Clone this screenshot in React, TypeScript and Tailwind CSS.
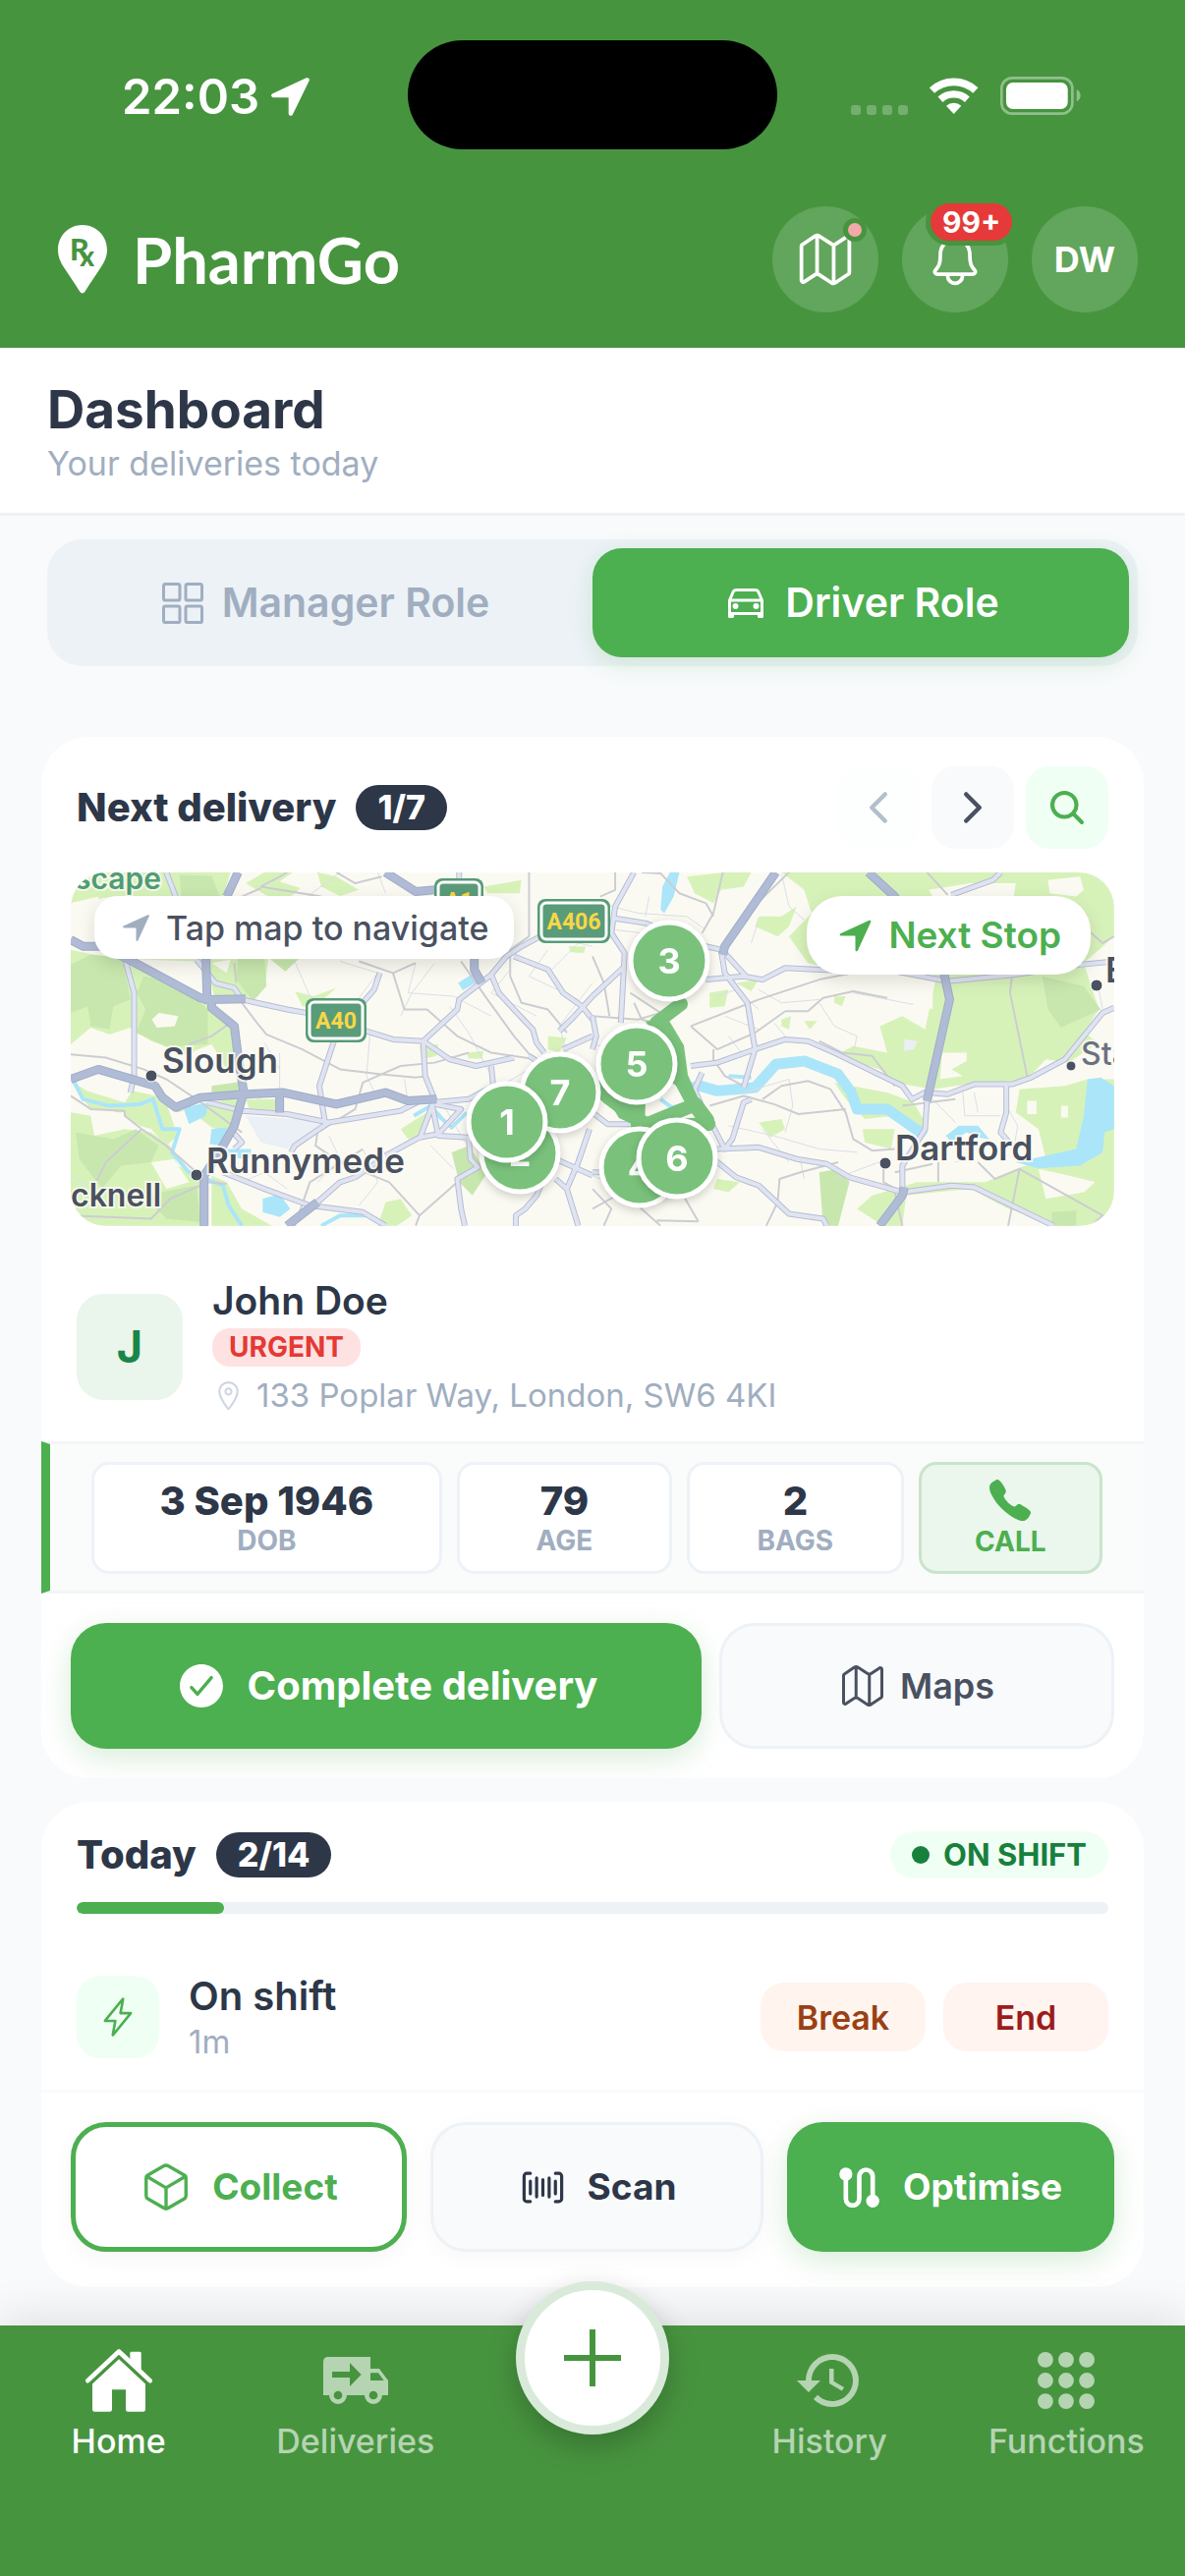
import type { ReactNode } from "react";
import {
  IoBarcodeOutline,
  IoCall,
  IoCarOutline,
  IoCheckmarkCircle,
  IoChevronBack,
  IoChevronForward,
  IoCubeOutline,
  IoFlashOutline,
  IoGridOutline,
  IoLocationOutline,
  IoMapOutline,
  IoNavigate,
  IoNotificationsOutline,
  IoSearch,
} from "react-icons/io5";
import { MdHistory } from "react-icons/md";

/* ---------- Drawn icons ---------- */

function LocationArrow() {
  return (
    <svg viewBox="678 56 118 118" className="size-[39px]" aria-hidden="true">
      <path d="M789 63L685 111H738V167z" fill="#fff" stroke="#fff" strokeWidth="13" strokeLinejoin="round" />
    </svg>
  );
}

function SignalDots() {
  return (
    <span className="flex gap-1.5 pt-7" aria-hidden="true">
      {[0, 1, 2, 3].map((i) => (
        <span key={i} className="size-[10px] rounded-[3px] bg-[#75af70]" />
      ))}
    </span>
  );
}

function Wifi() {
  return (
    <svg viewBox="526 56 152 112" className="h-[37px] w-[50px]" fill="none" stroke="#fff" aria-hidden="true">
      <path d="M533.5 95.6A99 99 0 0 1 668.5 95.6" strokeWidth="23" />
      <path d="M559.4 123.4A61 61 0 0 1 642.6 123.4" strokeWidth="22" />
      <path d="M601 168L577.8 143.1A34 34 0 0 1 624.2 143.1z" fill="#fff" stroke="none" />
    </svg>
  );
}

function Battery() {
  return (
    <svg viewBox="744 54 247 117" className="h-[39px] w-[82px]" aria-hidden="true">
      <rect x="748" y="58" width="217" height="109" rx="32" fill="none" stroke="#90c08c" strokeWidth="8" />
      <rect x="762" y="72" width="189" height="81" rx="21" fill="#fff" />
      <path d="M978 94c16 7 16 29 0 36z" fill="#90c08c" />
    </svg>
  );
}

function LogoPin() {
  return (
    <svg viewBox="27 506 151 211" className="h-[70px] w-[50px]" aria-hidden="true">
      <path
        d="M102 506c-42 0-75 33-75 76 0 22 9 40 18 54 14 22 34 50 48 73q9 14 18 0c14-23 34-51 48-73 9-14 19-32 19-54 0-43-34-76-76-76z"
        fill="#fff"
      />
      <g fill="#47943f" fontFamily="Lato, sans-serif" fontWeight="900">
        <text x="63" y="614" fontSize="92">R</text>
        <text x="94" y="632" fontSize="84">x</text>
      </g>
    </svg>
  );
}

function HomeIcon() {
  return (
    <svg viewBox="48 606 204 191" className="h-16 w-[68px]" fill="currentColor" aria-hidden="true">
      <path d="M55 702L150 613L245 702" fill="none" stroke="currentColor" strokeWidth="14" strokeLinecap="round" strokeLinejoin="round" />
      <path d="M188 614h26q4 0 4 4v52l-34-34v-18q0-4 4-4z" />
      <path d="M150 636L231 712V790q0 7-7 7H178q-7 0-7-7V729H129v61q0 7-7 7H76q-7 0-7-7V712z" />
    </svg>
  );
}

function TruckIcon() {
  return (
    <svg viewBox="774 630 198 144" className="h-12 w-[66px]" fill="currentColor" aria-hidden="true">
      <path
        fillRule="evenodd"
        d="M788 630H918V666H945L972 702V747H954a27 27 0 0 1-54 0H846a27 27 0 0 1-54 0H774V644a14 14 0 0 1 14-14zM918 679v23h41l-17-23zM801 675v18h54v27l35-36-35-36v27zM806 747a13 13 0 1 0 26 0a13 13 0 1 0-26 0M914 747a13 13 0 1 0 26 0a13 13 0 1 0-26 0"
      />
    </svg>
  );
}

function DotsIcon() {
  const steps = [24, 88, 152];
  return (
    <svg viewBox="0 0 176 176" className="size-[58px]" fill="currentColor" aria-hidden="true">
      {steps.map((y) => steps.map((x) => <circle key={`${x}-${y}`} cx={x} cy={y} r="24" />))}
    </svg>
  );
}

function RouteIcon() {
  return (
    <svg viewBox="191 46 122 123" className="size-[41px]" aria-hidden="true">
      <path d="M211 67V142a20.5 20.5 0 0 0 41 0V74a20.5 20.5 0 0 1 41 0V149" fill="none" stroke="#fff" strokeWidth="14" />
      <circle cx="211" cy="67" r="20" fill="#fff" />
      <circle cx="293" cy="149" r="20" fill="#fff" />
    </svg>
  );
}

/* ---------- Map ---------- */

const LIGHT = "#d7f2b9";
const DARK = "#c8e7ae";
const CREAM = "#fbfaf2";
const WATER = "#abe5f9";

type Pt = [string, string];

const westAreas: Pt[] = [
  [LIGHT, "M187 700L250 715L330 725L530 850L560 880L625 950L640 1010L600 1060L560 985L480 1020L440 990L400 975L345 935L290 955L240 935L187 985z"],
  [DARK, "M187 745L240 715L325 725L345 850L300 870L290 940L240 930L232 870L187 890z"],
  [DARK, "M380 780L430 790L530 860L550 880V985L440 992L360 950L385 880L362 830z"],
  [CREAM, "M402 910L420 890L472 900L462 930L415 935z"],
  [LIGHT, "M230 467H610L590 540H300L187 560L200 490z"],
  [DARK, "M475 475L560 478L582 540H480z"],
  [CREAM, "M187 560L260 540L260 680L187 665z"],
  [LIGHT, "M350 728H710L702 800L660 852L570 850L555 790L520 735z"],
  [DARK, "M630 728H700L705 810L670 855L625 790z"],
  [CREAM, "M560 740L610 730L600 770z"],
  [DARK, "M715 728H790L755 765z"],
  [LIGHT, "M700 467H775L740 495L795 515L770 540H710L650 500z"],
  [LIGHT, "M840 467L890 480L950 520L900 538L850 510z"],
  [LIGHT, "M1280 510L1380 490L1375 530L1290 530z"],
  [LIGHT, "M780 825L830 840L890 815L850 855L880 870L800 870z"],
  [LIGHT, "M187 1095L230 1125L330 1160L350 1125L415 1140L470 1190L600 1150L640 1150L600 1250L560 1235L520 1200L440 1160L470 1260L440 1290L400 1240L370 1230L300 1185L240 1180z"],
  [CREAM, "M240 1190L330 1190L330 1235L270 1270L240 1240z"],
  [LIGHT, "M187 1190L240 1200L250 1260L330 1240L400 1250L450 1290L470 1350L540 1380V1531H220L187 1480z"],
  [DARK, "M200 1250L300 1270L360 1240L420 1290L400 1340L320 1350L270 1420L210 1330z"],
  [DARK, "M380 1440L520 1410L530 1520L440 1510z"],
  [CREAM, "M400 1340L460 1330L500 1400L440 1420z"],
  [DARK, "M560 1110L650 1095L640 1130L560 1130z"],
  [LIGHT, "M650 1150H740V1185L660 1180z"],
  [LIGHT, "M560 1380L600 1400L640 1480L720 1531H560z"],
  [LIGHT, "M1060 1240L1130 1190L1120 1260L1080 1270z"],
  [DARK, "M1195 1310L1240 1290L1290 1370L1250 1440L1215 1400z"],
  [LIGHT, "M1020 1460L1060 1450L1090 1500L1050 1531H1000z"],
  [LIGHT, "M1110 990L1160 985L1155 1020L1115 1030z"],
  [LIGHT, "M1235 1010L1280 1005L1275 1028L1240 1028z"],
  [LIGHT, "M1450 960L1500 965L1480 1010L1450 1000z"],
  [LIGHT, "M1505 690L1550 690L1545 710L1510 708z"],
  ["#eaf0f6", "M650 1200L860 1215L760 1300L690 1280z"],
  [WATER, "M485 1175L550 1160L545 1200L500 1225z"],
  [WATER, "M560 1240L600 1235L590 1290L555 1285z"],
  [WATER, "M695 1450L740 1435L768 1480L740 1505L695 1490z"],
  [WATER, "M600 1300L665 1300L660 1330L610 1325z"],
  [WATER, "M1212 800L1255 770L1265 795L1225 822z"],
];

const westWater = [
  "M195 1095L220 1150L290 1170L370 1165L405 1150L430 1240L475 1240L455 1310L500 1370L590 1410L605 1470L640 1531",
  "M1095 1200L1140 1170L1170 1210L1195 1235L1235 1190",
  "M850 1531L900 1500L980 1500",
];

const westGray = [
  "M187 1015L280 1025L380 1060L440 1090L520 1150L640 1250",
  "M640 860L680 920L705 955L800 1000L900 1060L1010 1075L1100 1085L1130 1080",
  "M610 920L560 960L500 985",
  "M187 1140L240 1180L330 1185V1200L375 1240L440 1290L520 1370",
  "M375 1240L280 1340L250 1410",
  "M600 1405L550 1400L450 1450L400 1510L187 1500",
  "M690 515L600 560L560 540",
  "M690 510L740 480L760 467M620 740L625 800",
  "M690 510L850 540",
  "M1400 467V660L1350 700V780L1380 860L1450 880L1500 950",
  "M1040 770L1070 880L1130 880L1210 960L1300 1010L1420 1030",
  "M1010 1075L1060 1050L1150 1040L1240 1010",
  "M1220 735L1290 850L1360 960L1420 1040",
  "M1010 1075L960 1100L940 1180L840 1250L835 1290L900 1340L1030 1400L1110 1500L1100 1531",
  "M780 1531L820 1400L960 1300",
  "M890 467L940 500L1010 480",
  "M1110 1500L1180 1430L1260 1350",
  "M950 735L1040 770L1100 740",
];

const westMinor = [
  "M780 735L820 840L870 860M900 735L1000 770L940 860L820 880",
  "M1100 740L1080 830L1200 840L1300 900M1150 740L1090 830L1060 900",
  "M1190 870L1240 950L1300 1080M1350 760L1300 830L1420 900",
  "M740 1010V1120L680 1150M700 980L740 1060",
  "M1450 700L1400 780L1530 850M1460 760L1530 680L1568 690",
  "M1400 1060L1340 1100M1500 1010L1480 930L1568 800",
  "M980 940L970 1080L1000 1150M1070 1090L1080 1160",
  "M960 1300L1000 1400L950 1470M870 1260L900 1330L840 1400",
  "M790 560L900 467M1000 467L1020 530M600 560L700 540",
  "M1180 1180L1230 1280M1140 1290L1200 1360",
  "M187 1380L220 1400L200 1450M640 1400L700 1370L760 1420",
];

const westRoads = [
  "M440 467L465 540M330 725L355 830L355 1080L345 1130",
  "M520 730L570 800L620 815L640 850L760 880L810 890L970 945L1040 970L1120 975L1190 1030L1260 1050L1360 1025",
  "M1120 975L1210 880L1215 850L1300 775L1340 720L1380 690L1430 660",
  "M1300 775L1320 830L1360 880L1410 940L1420 980L1440 1010",
  "M1360 720L1450 760L1490 830L1540 870L1568 910",
  "M1568 840L1520 900L1480 945",
  "M1120 975L1125 1080L1150 1150L1110 1270",
  "M885 970L845 1110L860 1220",
  "M1005 770L990 820L960 860",
  "M550 1160L640 1185L760 1195L870 1220L1060 1185L1120 1150",
  "M770 1310L780 1290L870 1220",
  "M1020 1320L1110 1265L1160 1255L1220 1180L1150 1165",
  "M1140 1150L1160 1260L1240 1265L1290 1290",
  "M1240 1265L1245 1330L1265 1355L1210 1390L1220 1480L1230 1531",
  "M590 1370L700 1420L820 1470L960 1490L1020 1531",
  "M840 1460L900 1400L940 1385L1010 1330",
  "M1300 1050L1305 1110L1240 1150L1140 1160",
  "M1470 1300L1420 1440L1390 1480L1365 1500V1531",
  "M1470 1390L1500 1420L1530 1531M1500 1420L1530 1340L1560 1240",
  "M1470 1330L1568 1380M1215 467V540",
  "M1400 1020L1440 1050M1490 1000L1568 960",
  "M610 1240L640 1280L620 1300",
];

const westMotorways = [
  "M187 670L220 690L270 690L350 735L530 845L560 855L560 875L620 930L630 1020L645 1130L620 1230L580 1310L540 1380V1531",
  "M545 725L548 850L650 848",
  "M187 1090L260 1060L410 1110L430 1145L465 1175L530 1145L645 1135L750 1130L890 1165L1020 1130L1080 1155L1155 1150",
  "M740 1130V1190",
  "M630 467L600 540",
  "M1020 467L1100 525L1150 520",
  "M1255 725L1255 760L1275 800",
  "M840 1460L760 1531",
];

const eastAreas: Pt[] = [
  [LIGHT, "M250 480L350 467L420 467L400 510L340 520L320 560L270 530z"],
  [LIGHT, "M440 600L500 600L540 570L520 630L490 660L430 630z"],
  [LIGHT, "M500 467H1380V660L1300 740L1340 880L1300 950L1340 980L1260 1040L1200 1030L1150 1090L1060 1100L960 1110L900 1120L800 1100L760 1060L640 1020L690 990L780 1010L760 930L820 900L880 940L910 780L690 770L570 740L520 660L580 590L560 520z"],
  [CREAM, "M590 700L900 775L900 880L860 860L800 880L700 850L600 780z"],
  [CREAM, "M890 520L1000 500L1120 500L1115 540H900z"],
  [CREAM, "M1205 490L1290 480L1300 520L1280 540L1210 530z"],
  [CREAM, "M925 1010H990V1035L950 1060L980 1080L920 1090z"],
  [CREAM, "M640 1010L760 1090L790 1130L700 1160L660 1080L600 1040z"],
  [DARK, "M1190 780L1300 810L1345 880L1240 935L1205 880z"],
  [LIGHT, "M640 1100L780 1130L850 1160L890 1240L850 1250L800 1200L720 1210L670 1150z"],
  [LIGHT, "M1130 1120L1250 1110L1310 1090L1380 1090V1531H1240L1100 1480L1000 1420L830 1440L820 1531H770L700 1480L740 1440L860 1400L1040 1400L1120 1360L1200 1330L1180 1240L1120 1190z"],
  [CREAM, "M1180 1360L1260 1380L1330 1400L1300 1430L1200 1450z"],
  [CREAM, "M1150 1155H1175V1195H1150zM1240 1170H1258V1205H1240z"],
  [LIGHT, "M715 1240L800 1240L790 1300L720 1280z"],
  [DARK, "M600 1370L650 1360L680 1400L650 1531H610z"],
  [DARK, "M1215 1490L1280 1485V1531H1215z"],
  [LIGHT, "M330 1390L390 1400L360 1430L320 1420z"],
  [LIGHT, "M440 1220L500 1210L510 1240L470 1265z"],
  [LIGHT, "M310 830L360 820L350 870L310 875zM500 910L525 900L520 940L500 930zM560 915L595 915L575 940zM380 800L440 790L420 825z"],
  [LIGHT, "M640 840L670 840L660 870L640 860z"],
  ["#eaf0f6", "M825 970L860 975L850 1000L825 1005z"],
  [WATER, "M205 467H230L215 540L190 590L180 580L185 510z"],
  [WATER, "M1310 1090L1345 1085L1380 1110V1240L1355 1250L1350 1310L1290 1350L1180 1358L1120 1340L1200 1320L1280 1300L1300 1200z"],
  [WATER, "M935 1260L970 1230L1020 1230L1050 1270L1020 1265L990 1250L950 1280z"],
];

const eastGray = [
  "M60 467V520L20 540M130 467L180 470L230 530L300 560L320 600",
  "M345 467L320 590L290 650M520 467L400 600",
  "M0 900L120 910L180 890L100 830M260 930L440 850L600 790L690 770",
  "M260 930L330 1000L430 950L510 885H570L610 845L690 825L780 845",
  "M320 1000V1030L350 1080L400 1110M600 975L660 1010L740 1020L780 1080L800 1110",
  "M450 1150L500 1110L570 1095L630 1120L670 1190L690 1270L740 1305L800 1300",
  "M310 1170L400 1140L480 1165L545 1195L670 1180",
  "M885 467L940 535M1380 660L1350 680L1310 640",
  "M1110 780L1105 830L1150 1080M1020 1340L1065 1390L1130 1360L1350 1500L1320 1531",
  "M1130 1360L1100 1531M770 1350V1400L820 1430M800 1370L900 1345",
  "M490 1460L495 1390L550 1370L650 1340M490 1460L460 1531M800 1430L820 1531",
  "M0 1480L80 1430L180 1531M170 1515L280 1518M280 1518L240 1440M915 1340V1400",
  "M0 720L30 800L45 900M110 860L130 910L200 930",
  "M0 1420L50 1480L30 1531M820 1170L960 1150",
];

const eastMinor = [
  "M20 560L120 590L250 600L300 640M60 640L130 650M150 540L140 600",
  "M330 840L380 820L440 880M350 900L440 940M440 820L500 860L600 850",
  "M360 960L400 1020M480 920L510 960M600 860L640 930L700 960L690 1010",
  "M500 470L520 570L560 610M420 680L440 610M690 830L850 865",
  "M400 1130L520 1090L530 1170L510 1250M450 1240L520 1340",
  "M360 1230L480 1260L600 1300L700 1310M640 1390L780 1330M550 1330L560 1390",
  "M980 1130L985 1200L1080 1200M900 1150L960 1220M1100 1180L1125 1230L1115 1300",
  "M1010 1130L1020 1190M1340 820L1350 880M960 1340L1000 1320",
  "M0 980L60 1010L30 1080M20 620L80 700M0 1380L120 1440",
];

const eastRoads = [
  "M110 467L60 570L50 650L85 710L75 920M0 840L85 750",
  "M55 605L140 620L300 690L340 700L350 770L410 860L430 1000L400 1115",
  "M300 790L400 780L450 790L510 755L600 760L800 765L940 795L1120 775L1290 745L1380 735",
  "M350 710L410 785M1080 467L1060 490L950 535",
  "M260 1050L330 1040L430 1000L510 970L570 975L640 1010L820 1110L845 1150L880 1130L940 1135L1010 1105L1110 1105L1160 1085L1250 1030L1350 890L1380 875",
  "M1095 1105V1190L1080 1250L1110 1290",
  "M885 1155L880 1240L820 1350V1430",
  "M330 1300L440 1295L540 1330L620 1345L680 1385L820 1430L950 1410L1010 1415L1220 1531",
  "M300 1190L350 1300L370 1270L400 1160L420 1150",
  "M320 1330L380 1385L440 1410L520 1495L610 1510L620 1531",
  "M0 1190L40 1225L110 1225M0 1370H60",
  "M290 1070L270 1120L300 1200",
  "M0 900L10 960L0 1000",
];

const eastMotorways = [
  "M485 467L350 690L345 715",
  "M730 467L800 540L930 770L945 850L885 1155",
  "M825 1415L820 1440L760 1531",
];

function Lines({ paths, stroke, width }: { paths: string[]; stroke: string; width: number }) {
  return (
    <g fill="none" stroke={stroke} strokeWidth={width} strokeLinejoin="round">
      {paths.map((d) => (
        <path key={d} d={d} vectorEffect="non-scaling-stroke" />
      ))}
    </g>
  );
}

type HalfProps = {
  areas: Pt[];
  minor: string[];
  gray: string[];
  roads: string[];
  motorways: string[];
  children: ReactNode;
};

function MapHalf({ areas, minor, gray, roads, motorways, children }: HalfProps) {
  return (
    <>
      {areas.map(([fill, d]) => (
        <path key={d} d={d} fill={fill} />
      ))}
      {children}
      <Lines paths={minor} stroke="#d9dfe8" width={1} />
      <Lines paths={gray} stroke="#cccdd2" width={2} />
      <Lines paths={roads} stroke="#b6bdd6" width={6} />
      <Lines paths={roads} stroke="#e0e4f1" width={4} />
      <Lines paths={motorways} stroke="#a1adcb" width={9} />
      <Lines paths={motorways} stroke="#b0bbd5" width={7} />
    </>
  );
}

function Shield({ x, y, w, label }: { x: number; y: number; w: number; label: string }) {
  return (
    <g>
      <rect x={x} y={y} width={w} height="45" rx="8" fill="#569c76" />
      <rect x={x + 4} y={y + 4} width={w - 8} height="37" rx="5" fill="#5a9b79" stroke="#fff" strokeWidth="3" />
      <text x={x + w / 2} y={y + 31} textAnchor="middle" fill="#f7d747" fontFamily="Roboto, sans-serif" fontWeight="700" fontSize="23">
        {label}
      </text>
    </g>
  );
}

const places = [
  { name: "Slough", x: 93, y: 204, dot: [82, 207] },
  { name: "Runnymede", x: 138, y: 306, dot: [128, 308] },
  { name: "Dartford", x: 839, y: 293, dot: [829, 296] },
  { name: "E", x: 1053, y: 112, dot: [1044, 115] },
];

const pins = [
  { n: 2, x: 457, y: 286 },
  { n: 7, x: 498, y: 224 },
  { n: 1, x: 444, y: 254 },
  { n: 4, x: 579, y: 300 },
  { n: 6, x: 617, y: 291 },
  { n: 3, x: 609, y: 90 },
  { n: 5, x: 576, y: 195 },
];

function DeliveryMap() {
  return (
    <svg
      viewBox="0 0 1062 360"
      preserveAspectRatio="xMidYMid slice"
      className="block h-full w-full font-[Inter,sans-serif]"
      role="img"
      aria-label="Map of today's stops"
    >
      <rect width="1062" height="360" fill={CREAM} />
      <g transform="translate(-72 -158) scale(0.3846 0.3381)">
        <MapHalf areas={westAreas} minor={westMinor} gray={westGray} roads={westRoads} motorways={westMotorways}>
          <Lines paths={westWater} stroke={WATER} width={4} />
        </MapHalf>
      </g>
      <g transform="translate(531 -158) scale(0.3846 0.3381)">
        <MapHalf areas={eastAreas} minor={eastMinor} gray={eastGray} roads={eastRoads} motorways={eastMotorways}>
          <Lines
            paths={["M270 1105L330 1125L430 1115L485 1045L560 1035L650 1075L685 1130L700 1180L780 1180L830 1220L880 1260"]}
            stroke={WATER}
            width={11}
          />
          <Lines paths={["M180 1150L210 1175L250 1165M220 1100L270 1105M360 1080L420 1085"]} stroke={WATER} width={4} />
        </MapHalf>
      </g>

      <g fill="none" stroke="#7ac27c" strokeWidth="14" strokeLinejoin="round" strokeLinecap="round">
        <path d="M621 134L596 153L615 182L620 210L634 236L649 256" />
        <path d="M535 218L548 230L577 252L587 256L636 236L648 252" />
        <path d="M577 252V266M612 258L649 256" />
      </g>
      <path d="M585 152L606 146L624 176L628 206L640 234L612 214L602 176z" fill="#7ac27c" />
      <path d="M535 212L585 232L584 262L558 250z" fill="#7ac27c" />

      <g fill="#4a5160">
        {places.map((p) => (
          <circle key={p.name} cx={p.dot[0]} cy={p.dot[1]} r="6" stroke="#fff" strokeWidth="1" />
        ))}
        <circle cx="1018" cy="197" r="5" stroke="#fff" strokeWidth="1" />
      </g>
      <g fill="#4a5160" stroke="#fbfaf2" strokeOpacity="0.85" strokeWidth="4" paintOrder="stroke" fontSize="35" fontWeight="600">
        {places.map((p) => (
          <text key={p.name} x={p.x} y={p.y}>
            {p.name}
          </text>
        ))}
        <text x="0" y="340" fontSize="32">cknell</text>
        <text x="1028" y="196" fontSize="32" fontWeight="500" fill="#6b7180">Sta</text>
        <text x="4" y="17" fontSize="30" fill="#4f9d74">scape</text>
      </g>

      <Shield x={239} y={128} w={62} label="A40" />
      <Shield x={475} y={27} w={74} label="A406" />
      <Shield x={370} y={6} w={50} label="A1" />

      {pins.map((p) => (
        <g key={p.n} className="drop-shadow-[0_3px_4px_rgba(0,0,0,0.18)]">
          <circle cx={p.x} cy={p.y} r="39" fill="#7ac27c" stroke="#fff" strokeWidth="5" />
          <text x={p.x} y={p.y + 13} textAnchor="middle" fill="#fff" fontWeight="700" fontSize="36">
            {p.n}
          </text>
        </g>
      ))}
    </svg>
  );
}

/* ---------- Page pieces ---------- */

function CountPill({ children }: { children: ReactNode }) {
  return (
    <span className="rounded-full bg-[#2d3748] px-[22px] text-[34px] leading-[46px] font-extrabold text-white">{children}</span>
  );
}

function Stat({ value, label }: { value: string; label: string }) {
  return (
    <div className="flex h-[114px] flex-col items-center justify-center rounded-[18px] border-[3px] border-[#edf2f7] bg-white pt-0.5">
      <span className="text-[40px] leading-[44px] font-extrabold text-[#2d3748]">{value}</span>
      <span className="text-[28px] leading-9 font-bold text-[#a0aec0]">{label}</span>
    </div>
  );
}

function Tab({ icon, label, active }: { icon: ReactNode; label: string; active?: boolean }) {
  return (
    <a
      href="#"
      aria-current={active ? "page" : undefined}
      className={`flex min-w-0 flex-col items-center gap-2 pt-[23px] text-[34px] leading-[42px] font-medium ${
        active ? "text-white" : "text-[#b5d4b2]"
      }`}
    >
      <span className="flex h-[66px] items-center">{icon}</span>
      {label}
    </a>
  );
}

export default function App() {
  return (
    <div className="flex min-h-screen flex-col bg-[#f8fafb] font-[Inter,sans-serif] text-[#2d3748]">
      <header className="bg-[#47943f] text-white">
        <div className="grid grid-cols-[1fr_auto_1fr] items-center pt-[41px]">
          <div className="flex items-center gap-3 pt-1 pl-[124px]">
            <span className="text-[49px] leading-none font-semibold">22:03</span>
            <LocationArrow />
          </div>
          <div className="h-[111px] w-[376px] rounded-full bg-black" />
          <div className="flex items-center justify-end gap-[22px] pt-0.5 pr-[106px]">
            <SignalDots />
            <Wifi />
            <Battery />
          </div>
        </div>
        <div className="flex items-center justify-between px-12 pt-[58px] pb-9">
          <div className="flex items-center gap-[26px] pl-[11px]">
            <LogoPin />
            <span className="font-[Lato,sans-serif] text-[65px] leading-none font-bold">PharmGo</span>
          </div>
          <div className="flex gap-6">
            <button aria-label="Map" className="relative flex size-[108px] items-center justify-center rounded-full bg-[#62a55c]">
              <IoMapOutline className="size-[60px]" />
              <span className="absolute top-3 right-3 size-6 rounded-full border-[5px] border-[#47943f] bg-[#f2a9a7]" />
            </button>
            <button aria-label="Notifications" className="relative flex size-[108px] items-center justify-center rounded-full bg-[#62a55c]">
              <IoNotificationsOutline className="size-[60px]" />
              <span className="absolute -top-2 left-6 rounded-full border-[5px] border-[#47943f] bg-[#e53a39] px-3 text-[30px] leading-[38px] font-bold">
                99+
              </span>
            </button>
            <button className="flex size-[108px] items-center justify-center rounded-full bg-[#62a55c] text-[36px] font-bold">
              DW
            </button>
          </div>
        </div>
      </header>

      <div className="border-b-[3px] border-[#edf2f7] bg-white px-12 pt-8 pb-7">
        <h1 className="text-[53px] leading-[63px] font-bold">Dashboard</h1>
        <p className="text-[34px] leading-[45px] text-[#a0aec0]">Your deliveries today</p>
      </div>

      <main className="flex flex-1 flex-col pb-[39px]">
        <div className="mx-12 mt-6 grid grid-cols-2 rounded-[36px] bg-[#edf2f7] p-[9px]">
          <button className="flex h-[111px] items-center justify-center gap-4 text-[41px] font-semibold text-[#a0aec0]">
            <IoGridOutline className="size-12" />
            Manager Role
          </button>
          <button className="flex h-[111px] items-center justify-center gap-4 rounded-[30px] bg-[#4caf50] text-[41px] font-semibold text-white shadow-[0_6px_24px_rgba(76,175,80,0.2)]">
            <IoCarOutline className="size-12" />
            Driver Role
          </button>
        </div>

        <section className="mx-[42px] mt-[72px] overflow-hidden rounded-[48px] bg-white">
          <div className="flex items-center gap-5 px-9 pt-[30px] pb-6">
            <h2 className="text-[40px] leading-[48px] font-extrabold">Next delivery</h2>
            <CountPill>1/7</CountPill>
            <div className="ml-auto flex gap-3">
              <button disabled aria-label="Previous delivery" className="flex size-[84px] items-center justify-center rounded-3xl bg-[#fdfefe] text-[#b3bfcd]">
                <IoChevronBack className="size-12" />
              </button>
              <button aria-label="Next delivery" className="flex size-[84px] items-center justify-center rounded-3xl bg-[#f8fafc] text-[#4a5160]">
                <IoChevronForward className="size-12" />
              </button>
              <button aria-label="Search" className="flex size-[84px] items-center justify-center rounded-3xl bg-[#f0fff4] text-[#4caf50]">
                <IoSearch className="size-[42px]" />
              </button>
            </div>
          </div>

          <div className="relative mx-[30px] h-[360px] overflow-hidden rounded-[36px]">
            <DeliveryMap />
            <div className="absolute top-6 left-6 flex h-16 items-center gap-3.5 rounded-3xl bg-white px-[26px] text-[34px] font-medium text-[#4a5160] shadow-[0_6px_18px_rgba(0,0,0,0.12)]">
              <IoNavigate className="size-[33px] text-[#a0aec0]" />
              Tap map to navigate
            </div>
            <button className="absolute top-6 right-6 flex h-20 items-center gap-3.5 rounded-[36px] bg-white px-[30px] text-[37px] font-semibold text-[#4caf50] shadow-[0_6px_18px_rgba(0,0,0,0.12)]">
              <IoNavigate className="size-[39px]" />
              Next Stop
            </button>
          </div>

          <div className="flex items-center gap-[30px] px-9 pt-[52px] pb-[26px]">
            <div className="flex size-[108px] items-center justify-center rounded-[27px] bg-[#eaf5ec] text-[45px] font-bold text-[#198649]">
              J
            </div>
            <div>
              <h3 className="text-[39px] leading-[48px] font-semibold">John Doe</h3>
              <span className="mt-1 block w-fit rounded-[18px] bg-[#fee2e2] px-[17px] text-[28px] leading-[39px] font-bold text-[#e53935]">
                URGENT
              </span>
              <p className="mt-2 flex items-center gap-3 text-[33px] leading-[42px] text-[#a0aec0]">
                <IoLocationOutline className="size-[33px] text-[#cdd6e1]" />
                133 Poplar Way, London, SW6 4KI
              </p>
            </div>
          </div>

          <div className="grid grid-cols-[356fr_219fr_220fr_187fr] gap-[15px] border-y-[3px] border-l-[9px] border-y-[#f3f5f7] border-l-[#4caf50] bg-[#fafcfb] px-[42px] pt-[18px] pb-[17px]">
            <Stat value="3 Sep 1946" label="DOB" />
            <Stat value="79" label="AGE" />
            <Stat value="2" label="BAGS" />
            <button className="flex h-[114px] flex-col items-center justify-center rounded-[18px] border-[3px] border-[#c9e4cb] bg-[#ebf6ed] text-[28px] leading-9 font-bold text-[#4caf50]">
              <IoCall className="size-12" />
              CALL
            </button>
          </div>

          <div className="grid grid-cols-[642fr_402fr] gap-[18px] p-[30px]">
            <button className="flex h-32 items-center justify-center gap-5 rounded-[36px] bg-[#4caf50] text-[40px] font-bold text-white shadow-[0_9px_30px_rgba(76,175,80,0.22)]">
              <IoCheckmarkCircle className="size-[54px]" />
              Complete delivery
            </button>
            <button className="flex h-32 items-center justify-center gap-3.5 rounded-[36px] border-[3px] border-[#edf2f7] bg-[#f8fafc] text-[36px] font-semibold text-[#4a5160]">
              <IoMapOutline className="size-12" />
              Maps
            </button>
          </div>
        </section>

        <section className="mx-[42px] mt-6 overflow-hidden rounded-[48px] bg-white">
          <div className="flex items-center gap-5 px-9 pt-[30px] pb-6">
            <h2 className="text-[40px] leading-[48px] font-extrabold">Today</h2>
            <CountPill>2/14</CountPill>
            <span className="ml-auto flex items-center gap-3.5 rounded-[24px] bg-[#f0fff4] px-[22px] text-[31px] leading-[48px] font-bold text-[#17803d]">
              <span className="size-[18px] rounded-full bg-[#17803d]" />
              ON SHIFT
            </span>
          </div>
          <div className="mx-9 h-3 overflow-hidden rounded-full bg-[#edf2f7]" role="progressbar" aria-label="Deliveries completed" aria-valuemin={0} aria-valuemax={14} aria-valuenow={2}>
            <div className="h-full rounded-full bg-[#4caf50]" style={{ width: `${(2 / 14) * 100}%` }} />
          </div>

          <div className="flex items-center gap-[30px] border-b-[3px] border-[#f8fafc] px-9 pt-[59px] pb-[28px]">
            <div className="flex size-[84px] items-center justify-center rounded-3xl bg-[#f0fff4] text-[#4caf50]">
              <IoFlashOutline className="size-[42px]" />
            </div>
            <div>
              <h3 className="text-[40px] leading-[50px] font-semibold">On shift</h3>
              <p className="text-[33px] leading-[42px] text-[#a0aec0]">1m</p>
            </div>
            <div className="ml-auto flex gap-[18px]">
              <button className="h-[70px] w-[168px] rounded-[24px] bg-[#fff5ee] text-[34px] font-semibold text-[#9a4014]">Break</button>
              <button className="h-[70px] w-[168px] rounded-[24px] bg-[#fff4f0] text-[34px] font-semibold text-[#9b1c1c]">End</button>
            </div>
          </div>

          <div className="grid grid-cols-[342fr_339fr_333fr] gap-6 px-[30px] pt-[30px] pb-9 text-[37px] font-bold">
            <button className="flex h-[132px] items-center justify-center gap-5 rounded-[36px] border-[5px] border-[#4caf50] bg-white text-[#4caf50] shadow-[0_6px_24px_rgba(0,0,0,0.04)]">
              <IoCubeOutline className="size-[54px]" />
              Collect
            </button>
            <button className="flex h-[132px] items-center justify-center gap-5 rounded-[36px] border-[3px] border-[#edf2f7] bg-[#f8fafc] shadow-[0_6px_24px_rgba(0,0,0,0.03)]">
              <IoBarcodeOutline className="size-[51px]" />
              Scan
            </button>
            <button className="flex h-[132px] items-center justify-center gap-6 rounded-[36px] bg-[#4caf50] text-white shadow-[0_9px_30px_rgba(76,175,80,0.22)]">
              <RouteIcon />
              Optimise
            </button>
          </div>
        </section>
      </main>

      <nav className="relative grid h-[255px] grid-cols-5 bg-[#47943f] shadow-[0_-9px_42px_rgba(0,0,0,0.1)]">
        <Tab icon={<HomeIcon />} label="Home" active />
        <Tab icon={<TruckIcon />} label="Deliveries" />
        <div className="flex justify-center">
          <button
            aria-label="Add"
            className="-mt-[45px] flex size-[156px] items-center justify-center rounded-full border-[9px] border-[#d9eadb] bg-white shadow-[0_12px_30px_rgba(0,0,0,0.22)]"
          >
            <svg viewBox="0 0 58 58" className="size-[58px]" stroke="#47943f" strokeWidth="6" aria-hidden="true">
              <path d="M29 0V58M0 29H58" />
            </svg>
          </button>
        </div>
        <Tab icon={<MdHistory className="size-[72px]" />} label="History" />
        <Tab icon={<DotsIcon />} label="Functions" />
      </nav>
    </div>
  );
}
